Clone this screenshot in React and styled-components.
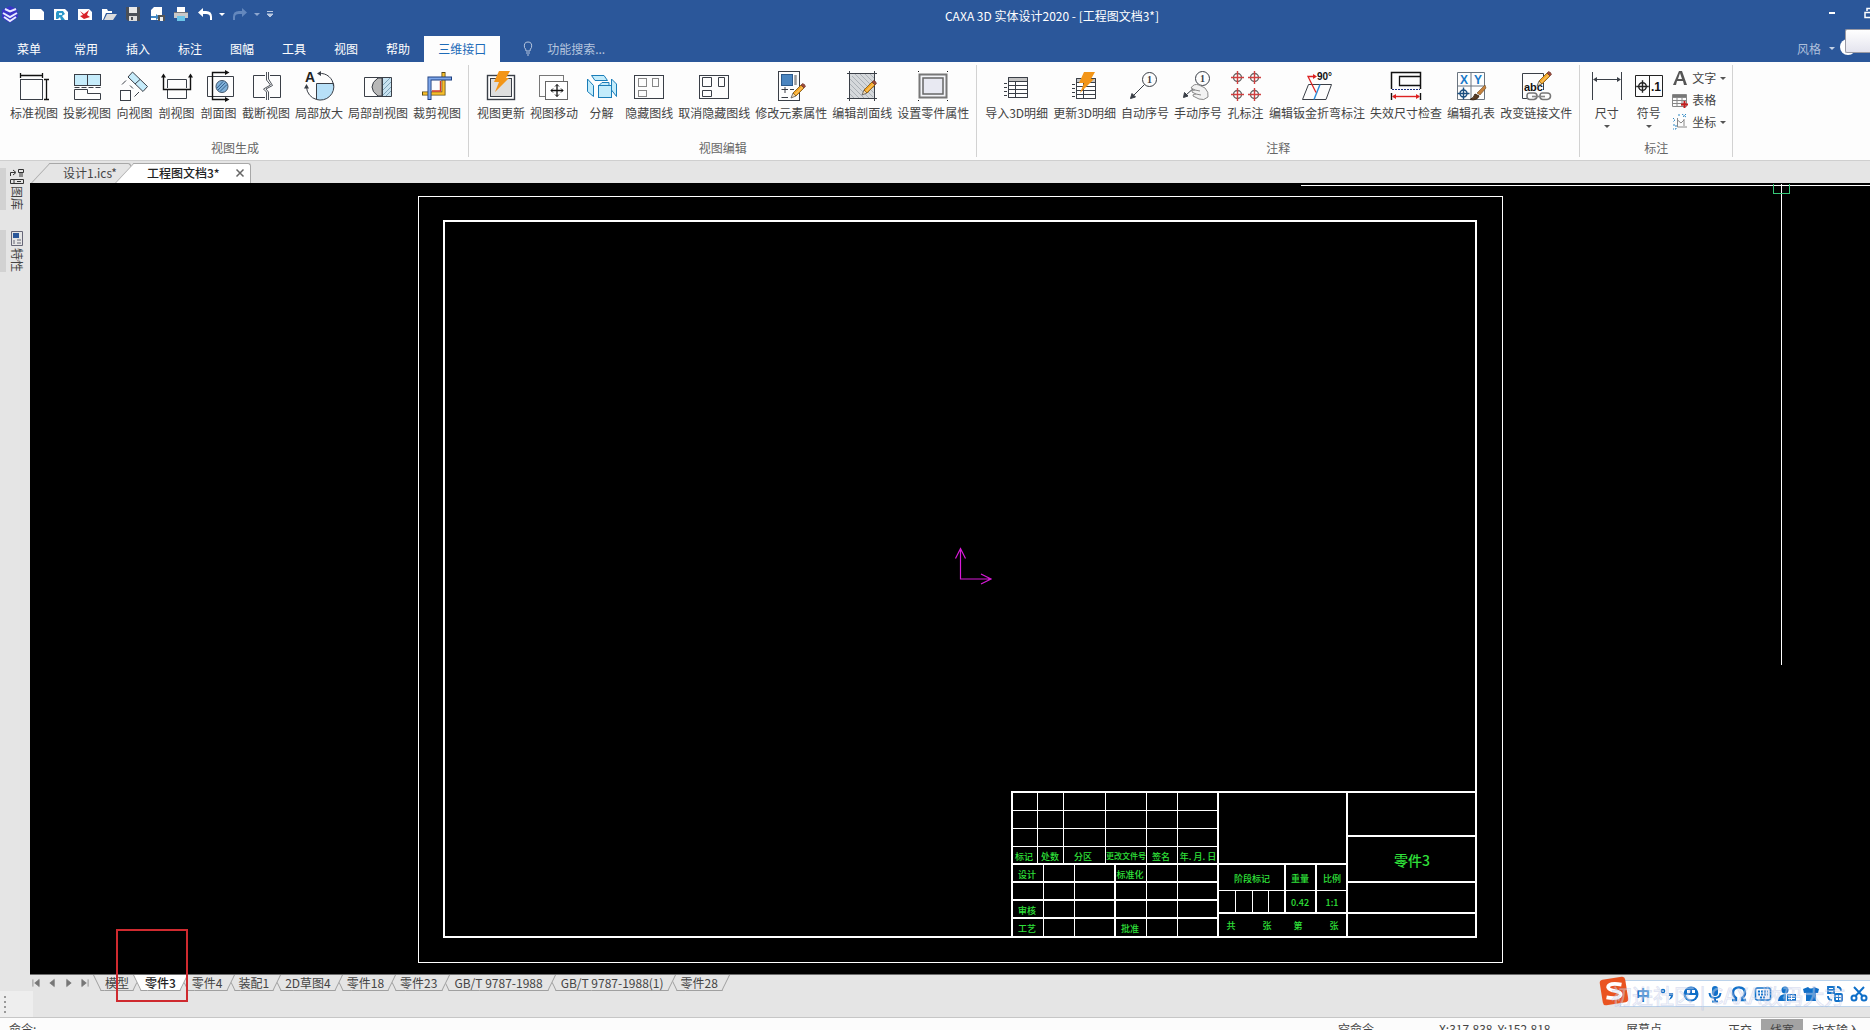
import React from "react";
import styled, { createGlobalStyle, css } from "styled-components";

// Global style
const GlobalStyle = createGlobalStyle`
  * {
    box-sizing: border-box;
  }
  body {
    margin: 0;
    overflow: hidden;
    font-family: "Noto Sans CJK SC", "Noto Sans", sans-serif;
    font-size: 12px;
    color: #444;
  }
  button,
  input {
    font: inherit;
    color: inherit;
    background: none;
    border: 0;
    padding: 0;
    margin: 0;
  }
  svg {
    display: block;
    flex-shrink: 0;
  }
`;

// Shared icon parts
const Pencil = ({ x, y }) => (
  <g transform={`translate(${x} ${y})`}>
    <path d="M0 14L2 9L5 12Z" fill="#f3d9b0" stroke="#555" strokeWidth="0.8" />
    <path d="M2 9L10 1L13 4L5 12Z" fill="#f5a623" stroke="#7a5312" strokeWidth="0.8" />
    <path d="M4 10.5L11.5 3" stroke="#fbd38a" />
    <path d="M10 1L11.5 -0.5Q14 0 14.5 2.5L13 4Z" fill="#9b4a3c" stroke="#6b3429" strokeWidth="0.6" />
  </g>
);

const Bolt = ({ x, y }) => (
  <path
    transform={`translate(${x} ${y})`}
    d="M5 0H16L12 7H15L1 21L5 11H0Z"
    fill="#f39517"
    stroke="none"
  />
);

const Target = ({ x, y, r, line, ring }) => (
  <g transform={`translate(${x} ${y})`} fill="none">
    <circle r={r} stroke={ring} strokeWidth="1.4" />
    <path d={`M${-r - 2.5} 0H${r + 2.5}M0 ${-r - 2.5}V${r + 2.5}`} stroke={line} strokeWidth="1.4" />
  </g>
);

const Table = ({ y }) => (
  <g transform={`translate(0 ${y})`}>
    <path d="M6.5 6.5H25.5V26.5H6.5Z" fill="#fff" />
    <path d="M7 7H25V10H7Z" fill="#c4c4c4" stroke="none" />
    <path d="M6.5 6.5H25.5V26.5H6.5ZM6.5 10.5H25.5M6.5 14.5H25.5M6.5 18.5H25.5M6.5 22.5H25.5M13.5 10.5V26.5M2 12.5H5M2 16.5H5M2 20.5H5M2 24.5H5" />
  </g>
);

const ink = "#3a3f47";

// Ribbon drawings, all on a 30 x 30 grid
const icons = {
  standard: (
    <g stroke="#111">
      <rect x="1.5" y="8.5" width="22" height="20" stroke={ink} />
      <path d="M1.5 4.5H23.5M1.5 2V7M23.5 2V7M27.5 8.5V28.5M25 8.5H30M25 28.5H30" strokeWidth="1.3" />
    </g>
  ),
  project: (
    <g>
      <rect x="2.5" y="3.5" width="26" height="11" fill="#c6ecfb" />
      <path d="M15.5 3.5V14.5M2.5 18.5H15.5V22.5H28.5V28.5H2.5Z" />
      <path d="M2.5 16.5H28.5" strokeDasharray="5 2" />
    </g>
  ),
  direction: (
    <g>
      <rect x="0.5" y="19.5" width="10" height="10" />
      <path d="M12.5 1L27.5 15.5L23 20.5L8 6Z" fill="#c6ecfb" />
      <path d="M20 8.5L15 13M2 13.5L6 9.5M10 14.5L13 17.5M14.5 25.5L19 21" />
    </g>
  ),
  section: (
    <g>
      <path d="M5.5 17V8.5H24.5V17M5.5 19V27.5H24.5V19" />
      <path d="M1.5 5V18.5H28.5V5" stroke="#111" strokeWidth="1.4" />
      <path d="M-1 6.5L1.5 2.5L4 6.5ZM26 6.5L28.5 2.5L31 6.5Z" fill="#111" stroke="none" />
    </g>
  ),
  plane: (
    <g>
      <path d="M8 5.5H3.5V25.5H29.5V5.5H9" />
      <path d="M22 1.5H8.5V28.5H22" stroke="#111" strokeWidth="1.4" />
      <path d="M21 -1L25.5 1.5L21 4ZM21 26L25.5 28.5L21 31Z" fill="#111" stroke="none" />
      <circle cx="18" cy="15.5" r="6" fill="#7fb0d8" stroke="#41566b" />
      <path d="M13 17L19 10.5M14 19L21.5 11.5M16 20.5L23 13.5" stroke="#35618c" />
    </g>
  ),
  broken: (
    <g>
      <path d="M14 4.5H2.5V26.5H14M19 4.5H29.5V26.5H19" />
      <path d="M15.5 1V9L19.5 14L12.5 18L15.5 21V29M17.5 1V8L21.5 14.5L15 18L17.5 21V29" strokeWidth="0.9" />
    </g>
  ),
  magnify: (
    <g>
      <path d="M12.5 12.5H29.5A13.5 13.5 0 0 1 12.5 28.5Z" fill="#b7e0f8" />
      <path d="M15 2.5A13 13 0 0 1 29.5 15M12.5 28.5A13.5 13.5 0 0 1 2.5 16" />
      <path d="M17 0L13 2.5L17 5ZM0 17.5L2.5 13L5 17.5Z" fill={ink} stroke="none" />
      <text x="1" y="11" fontSize="14" fontWeight="700" fill="#222" stroke="none" fontFamily="Liberation Sans">A</text>
    </g>
  ),
  partial: (
    <g>
      <rect x="19.5" y="6.5" width="9" height="19" fill="#c9e3f1" stroke="none" />
      <path d="M20 14L27 7M20 19L28 11M20 24L28 16M23 25L28 20" stroke="#7da3b8" />
      <path d="M19 7H15Q9 11 9 16T15 25H19Z" fill="#b8b8b8" />
      <path d="M1.5 6.5H28.5V25.5H1.5ZM19.5 6.5V25.5" />
    </g>
  ),
  crop: (
    <g>
      <path d="M21.5 1V22.5H0" stroke="#5c4a12" strokeWidth="4" />
      <path d="M21.5 2V22.5H1" stroke="#f7be2b" strokeWidth="2.4" />
      <path d="M18.5 10V20H10" stroke="#d83a24" strokeWidth="1.4" />
      <path d="M30 7.5H7.5V29" stroke="#1d3f80" strokeWidth="4" />
      <path d="M29 7.5H7.5V28" stroke="#7fa8ec" strokeWidth="2.2" />
    </g>
  ),
  refresh: (
    <g>
      <rect x="1.5" y="4.5" width="27" height="24" fill="#fff" strokeWidth="1.4" />
      <rect x="4.5" y="7.5" width="21" height="18" fill="#dedede" />
      <Bolt x="8" y="0" />
    </g>
  ),
  move: (
    <g>
      <rect x="0.5" y="4.5" width="24" height="21" stroke="#777" />
      <rect x="6.5" y="10.5" width="22" height="18" fill="#fff" stroke="#666" />
      <path d="M12 19.5H24M18 13.5V25.5" stroke="#111" strokeWidth="1.3" />
      <path d="M14 17.5L12 19.5L14 21.5M22 17.5L24 19.5L22 21.5M16 15.5L18 13.5L20 15.5M16 23.5L18 25.5L20 23.5" stroke="#111" />
    </g>
  ),
  explode: (
    <g stroke="#1a7db8" fill="#c3ecfb">
      <path d="M4.5 4.5H17L20.5 9.5H8ZM0.5 8L6.5 14.5V25.5L0.5 20.5ZM24.5 8L29.5 13V25.5L24.5 19Z" />
      <path d="M12 14.5L15 11.5H22V14" />
      <rect x="11.5" y="14.5" width="13" height="12" />
    </g>
  ),
  hide: (
    <g>
      <rect x="0.5" y="4.5" width="29" height="23" />
      <path d="M4.5 7.5H12.5V15.5H4.5ZM18.5 7.5H24.5V15.5H18.5ZM4.5 19.5H12.5V25.5H4.5Z" strokeDasharray="1 1" stroke="#111" />
    </g>
  ),
  unhide: (
    <g>
      <rect x="0.5" y="4.5" width="29" height="23" />
      <path d="M3.5 6.5H12.5V15.5H3.5ZM19.5 6.5H25.5V15.5H19.5ZM3.5 19.5H12.5V25.5H3.5Z" />
    </g>
  ),
  modify: (
    <g>
      <rect x="2.5" y="0.5" width="21" height="29" />
      <rect x="5.5" y="3.5" width="11" height="11" fill="#4a85c0" stroke="#2b5a8c" />
      <path d="M19.5 4V14" stroke="#999" strokeWidth="2.5" />
      <path d="M5.5 18.5H12M9 16V22M14 18.5H18M5.5 26.5H12" />
      <Pencil x="15" y="13" />
    </g>
  ),
  hatch: (
    <g>
      <rect x="3" y="3" width="24" height="24" fill="#d5d8db" stroke="none" />
      <path d="M3 8L22 27M3 13L17 27M3 18L12 27M3 23L7 27M5 5L26 26M8 3L27 22M13 3L27 17M18 3L27 12M23 3L27 7" stroke="#aab0b6" />
      <path d="M0 2.5H30M0 27.5H30M2.5 0V30M27.5 0V30" />
      <Pencil x="15" y="10" />
    </g>
  ),
  setup: (
    <g>
      <rect x="1.5" y="3.5" width="27" height="23" fill="#f3f4f8" stroke="#777" strokeWidth="2" />
      <rect x="5" y="7" width="20" height="16" fill="#e8e9f2" stroke="#666" strokeWidth="1.5" />
      <path d="M0 0.5H1M29 0.5H30M0 29.5H1M29 29.5H30" stroke="#111" />
    </g>
  ),
  importTable: <Table y={0} />,
  updateTable: (
    <g>
      <Table y={1} />
      <Bolt x="9" y="1" />
    </g>
  ),
  autoNumber: (
    <g>
      <circle cx="19.5" cy="8.5" r="7" />
      <path d="M14.5 13.5L3 25" />
      <path d="M0.5 27.5L2 22.5L5.5 26Z" fill={ink} />
      <text x="17" y="12" fontSize="10" fill={ink} stroke="none" fontFamily="Liberation Serif" fontWeight="700">1</text>
    </g>
  ),
  manualNumber: (
    <g>
      <circle cx="19.5" cy="7.5" r="7" />
      <path d="M12 16L3 24" />
      <path d="M0.5 26.5L1.5 21.5L5 25Z" fill={ink} />
      <path d="M8 17Q11 12 16 14L22 17Q26 21 25 26Q21 30 16 28L10 25Q9 23 13 23L9 21Q8 19 12 19L8 17Z" fill="#f2f2f2" stroke="#8a8a8a" />
      <path d="M12 19L17 20M13 23L18 24" stroke="#8a8a8a" />
      <text x="17" y="11" fontSize="10" fill={ink} stroke="none" fontFamily="Liberation Serif" fontWeight="700">1</text>
    </g>
  ),
  hole: (
    <g>
      {[6.5, 23.5].map((cx) =>
        [6.5, 23.5].map((cy) => (
          <Target key={`${cx}-${cy}`} x={cx} y={cy} r={4} ring="#666" line="#d04040" />
        ))
      )}
    </g>
  ),
  bend: (
    <g>
      <path d="M6.5 13.5H29.5L24 28.5H0.5Z" />
      <path d="M18 13.5L12 28.5" stroke="#2b8bd8" strokeWidth="1.4" />
      <path d="M14 21.5L6 5.5H13" stroke="#d22" strokeWidth="1.3" />
      <path d="M11 3L15 5.5L11 8Z" fill="#d22" stroke="none" />
      <text x="15" y="9" fontSize="10" fontWeight="700" fill="#111" stroke="none" fontFamily="Liberation Sans">90°</text>
    </g>
  ),
  invalid: (
    <g stroke="#111">
      <path d="M0.5 18V1.5H29.5V18" strokeWidth="1.5" />
      <path d="M29.5 5.5H8.5V14.5H29.5" strokeWidth="1.3" />
      <path d="M1 18.5H29" stroke="#1c2f80" strokeDasharray="2 1" />
      <path d="M0.5 22V29M29.5 22V29" strokeWidth="1.4" />
      <path d="M2 25.5H28" stroke="#d22" strokeWidth="1.4" />
      <path d="M5 23L1 25.5L5 28ZM25 23L29 25.5L25 28Z" fill="#d22" stroke="none" />
    </g>
  ),
  holeTable: (
    <g>
      <path d="M1.5 1.5H28.5V28.5H1.5ZM15 1.5V28.5M1.5 15H28.5" stroke="#6a7580" />
      <text x="4" y="13" fontSize="12" fontWeight="700" fill="#1878c8" stroke="none" fontFamily="Liberation Sans">X</text>
      <text x="18" y="13" fontSize="12" fontWeight="700" fill="#1878c8" stroke="none" fontFamily="Liberation Sans">Y</text>
      <Target x={7.5} y={22.5} r={3.5} ring="#1b4f80" line="#1b4f80" />
      <path d="M21 22L29 14L30 17L24 24Z" fill="#c4803c" stroke="#6b4a22" strokeWidth="0.6" />
      <path d="M14 28.5Q18 27 19 23L23 25Q21 30 14 28.5Z" fill="#5a3b22" stroke="#3c2817" />
    </g>
  ),
  link: (
    <g>
      <path d="M22.5 10V2.5H1.5V27.5H6M22.5 12V19" />
      <text x="3" y="20" fontSize="11" fontWeight="700" fill="#111" stroke="none" fontFamily="Liberation Sans">abc</text>
      <path d="M9 22H13Q16 22 16 25T13 28.5H9Q6 28.5 6 25T9 22ZM22 22H26Q29.5 22 29.5 25T26 28.5H22Q19 28.5 19 25T22 22Z" stroke="#777" strokeWidth="1.6" />
      <path d="M11 25.5H24" stroke="#888" strokeWidth="1.6" />
      <Pencil x="16" y="1" />
    </g>
  ),
  size: (
    <g>
      <path d="M0.5 1V29M29.5 1V29M2 8.5H28" />
      <path d="M5 6L1 8.5L5 11ZM25 6L29 8.5L25 11Z" fill={ink} stroke="none" />
    </g>
  ),
  symbol: (
    <g stroke="#222">
      <path d="M1.5 4.5H28.5V25.5H1.5ZM15.5 4.5V25.5" />
      <Target x={8.5} y={15.5} r={3.8} ring="#222" line="#222" />
      <text x="17" y="20" fontSize="12" fontWeight="700" fill="#111" stroke="none" fontFamily="Liberation Sans">.1</text>
    </g>
  ),
};

const Icon = ({ name }) => (
  <svg width="30" height="30" viewBox="0 0 30 30" fill="none" stroke={ink} overflow="visible">
    {icons[name]}
  </svg>
);

// Small drawings of the quick access bar, 18 x 18
const quickIcons = {
  logo: (
    <g>
      <path d="M1 5L9 1L16 4L17 12L9 18L1 13Z" fill="#3a35c8" />
      <path d="M4 4L9 6.5L15 4M2 8L9 12L16 8M3 12L9 16L15 12" stroke="#e8ecff" strokeWidth="2" fill="none" />
    </g>
  ),
  page: <path d="M2 4H13L16 7V15H2Z" fill="#fff" />,
  ics: (
    <g>
      <path d="M2 4H13L16 7V15H2Z" fill="#fff" />
      <path d="M5 6H11L13 9L10 11L13 15H9L8 12L6 14H4V8Z" fill="#2a97c9" />
      <path d="M7 8H10V10H7Z" fill="#d9f2fb" />
    </g>
  ),
  exb: (
    <g>
      <path d="M2 4H13L16 7V15H2Z" fill="#fff" />
      <path d="M4 6L8 9L13 5L11 10L14 12L8 14L4 11L7 10Z" fill="#d8232a" />
    </g>
  ),
  open: (
    <g>
      <path d="M2 15V4H7L8 6H12V8H6L3 15Z" fill="#fff" />
      <path d="M7 9H17L13 15H4Z" fill="#dcdcdc" />
    </g>
  ),
  save: (
    <g>
      <path d="M2 2H16V16H4L2 14Z" fill="#4a4f57" />
      <path d="M5 2H13V8H5Z" fill="#e8e8e8" />
      <path d="M5 11H13V16H5Z" fill="#dcdcdc" />
      <path d="M7 12H9V15H7Z" fill="#4a4f57" />
    </g>
  ),
  saveAs: (
    <g>
      <path d="M6 2H14V10H10V15H3V5Z" fill="#fff" />
      <path d="M3 11H8V9L12 12L8 15V13H3Z" fill="#3f87c4" />
      <path d="M10 10H17V16H10Z" fill="#555" />
      <path d="M12 12H15V16H12Z" fill="#eee" />
    </g>
  ),
  print: (
    <g>
      <path d="M5 2H13V7H5Z" fill="#fff" />
      <path d="M2 7H16V13H2Z" fill="#c9c9c9" />
      <path d="M2 7H16V8H2Z" fill="#777" />
      <path d="M5 11H13V16H5Z" fill="#6cc5e8" />
    </g>
  ),
  undo: <path d="M7 3V6H10Q16 6 16 12V15H14V12Q14 9 10 9H7V12L2 7.5Z" fill="#fff" />,
  redo: <path d="M11 3V6H8Q2 6 2 12V15H4V12Q4 9 8 9H11V12L16 7.5Z" fill="#6488bd" />,
};

const QuickIcon = ({ name }) => (
  <svg width="18" height="18" viewBox="0 0 18 18">
    {quickIcons[name]}
  </svg>
);

const smallIcons = {
  text: <path d="M1 15L7 1H10L15 15H12L11 11H5L4 15ZM6 9H10L8 3Z" fill="#555" />,
  table: (
    <g>
      <path d="M1 2H14V5H1Z" fill="#777" />
      <path d="M0.5 2.5H14.5V14.5H0.5ZM0.5 5.5H14.5M0.5 8.5H14.5M0.5 11.5H14.5M5 5V14M10 5V14" stroke="#888" fill="none" />
      <path d="M12.5 9V16M9 12.5H16" stroke="#c41f1f" strokeWidth="2" />
    </g>
  ),
  axis: (
    <g fill="none">
      <path d="M5.5 4V13H15M5.5 6L9 9L12 6M12 5V12" stroke="#888" />
      <path d="M1 4L3 6L1 8M1 11H4V15H1M6 1H8M10 0L14 3M14 0L11 3" stroke="#2b87c4" strokeDasharray="2 1" />
    </g>
  ),
};

const Caret = styled.span`
  display: inline-block;
  flex-shrink: 0;
  border: 3px solid transparent;
  border-top-color: ${(p) => p.$color || "#555"};
  border-bottom: 0;
`;

// Window frame
const Shell = styled.div`
  position: relative;
  display: flex;
  flex-direction: column;
  height: 100vh;
  overflow: hidden;
  background: #e5e5e5;
`;

const TitleBar = styled.header`
  display: flex;
  height: 36px;
  flex-shrink: 0;
  padding-bottom: 8px;
  align-items: center;
  background: #2b579a;
  color: #fff;
`;

const QuickAccess = styled.div`
  display: flex;
  align-items: center;
  width: 276px;
  flex-shrink: 0;
  gap: 6px;
  padding-left: 1px;
`;

const QuickButton = styled.button`
  display: flex;
  align-items: center;
  gap: 5px;
  &:first-child {
    margin-right: 3px;
  }
`;

const WindowTitle = styled.h1`
  flex: 1;
  margin: 0;
  padding-top: 4px;
  font-size: 12px;
  font-weight: 400;
  line-height: 20px;
  text-align: center;
`;

const WindowButtons = styled.div`
  display: flex;
  gap: 28px;
  width: 42px;
  overflow: hidden;
`;

const WindowButton = styled.button`
  flex-shrink: 0;
  color: #fff;
`;

// Menu row
const MenuBar = styled.nav`
  display: flex;
  height: 26px;
  flex-shrink: 0;
  align-items: stretch;
  background: #2b579a;
  color: #fff;
`;

const MenuTab = styled.button`
  padding: 0 14px 2px;
  white-space: nowrap;
  ${(p) =>
    p.$wide &&
    css`
      padding: 0 19px 2px 17px;
    `}
  ${(p) =>
    p.$active &&
    css`
      background: #fdfdfd;
      color: #1e6bb8;
    `}
`;

const SearchBox = styled.label`
  display: flex;
  flex: 1;
  align-items: center;
  gap: 11px;
  padding: 0 0 2px 20px;
  color: #b5c5de;
`;

const SearchInput = styled.input`
  width: 160px;
  outline: none;
  &::placeholder {
    color: #b5c5de;
    opacity: 1;
  }
`;

const StyleButton = styled.button`
  display: flex;
  align-items: center;
  gap: 8px;
  padding-bottom: 2px;
  color: #aebfdb;
`;

const HelpDot = styled.span`
  width: 16px;
  height: 16px;
  margin: 3px 14px 0 5px;
  border-radius: 50%;
  background: #fff;
`;

const FloatPanel = styled.div`
  position: absolute;
  top: 29px;
  right: 0;
  width: 25px;
  height: 24px;
  border: 1px solid #9a9aa4;
  border-right: 0;
  border-radius: 2px 0 0 2px;
  background: linear-gradient(#fff, #e4e4ee);
`;

// Ribbon
const Ribbon = styled.section`
  display: flex;
  height: 99px;
  flex-shrink: 0;
  padding: 3px 0 3px 2px;
  background: #fdfdfd;
  border-bottom: 1px solid #cfcfcf;
`;

const Group = styled.div`
  display: flex;
  flex-direction: column;
  justify-content: space-between;
  padding: 6px 5px 0;
  border-right: 1px solid #d2d2d2;
`;

const GroupTools = styled.div`
  display: flex;
`;

const GroupName = styled.div`
  line-height: 18px;
  text-align: center;
  color: #666;
`;

const Tool = styled.button`
  display: flex;
  flex-direction: column;
  align-items: center;
  min-width: 42px;
  padding: 0 2px 0 3px;
  line-height: 18px;
  white-space: nowrap;
  gap: 3px;
`;

const ToolColumn = styled.div`
  display: flex;
  flex-direction: column;
  width: 58px;
  padding-left: 3px;
`;

const SmallTool = styled.button`
  display: flex;
  align-items: center;
  gap: 4px;
  height: 22px;
  padding-bottom: 8px;
  line-height: 14px;
  white-space: nowrap;
`;

// Work area
const Work = styled.div`
  display: flex;
  flex: 1;
  min-height: 0;
`;

const SideBar = styled.aside`
  display: flex;
  flex-direction: column;
  gap: 20px;
  width: 30px;
  flex-shrink: 0;
  padding-top: 7px;
`;

const SideTab = styled.button`
  display: flex;
  flex-direction: column;
  align-items: center;
  gap: 1px;
  height: 42px;
  padding-right: 2px;
  border-left: 6px solid #d2d2d2;
`;

const SideLabel = styled.span`
  writing-mode: vertical-rl;
  text-orientation: sideways;
  line-height: 16px;
`;

const Main = styled.main`
  display: flex;
  flex: 1;
  flex-direction: column;
  min-width: 0;
`;

const DocTabs = styled.div`
  display: flex;
  height: 22px;
  flex-shrink: 0;
  padding: 2px 0 0 1px;
`;

const DocTab = styled.div`
  position: relative;
  isolation: isolate;
  display: flex;
  align-items: center;
  gap: 15px;
  height: 20px;
  padding: 0 ${(p) => (p.$active ? "6px 0 32px" : "14px 0 32px")};
  margin-left: ${(p) => (p.$active ? "-16px" : "0")};
  &::before,
  &::after {
    content: "";
    position: absolute;
    z-index: -1;
    top: 0;
    bottom: 0;
    background: ${(p) => (p.$active ? "#fff" : "#e5e5e5")};
    border-top: 1px solid #a8a8a8;
  }
  &::before {
    left: 0;
    width: 50%;
    border-left: 1px solid #a8a8a8;
    transform: skewX(-43deg);
    transform-origin: bottom left;
  }
  &::after {
    left: 30px;
    right: 0;
    border-right: 1px solid #a8a8a8;
    border-radius: 0 3px 0 0;
  }
`;

const DocName = styled.button`
  line-height: 18px;
  font-weight: ${(p) => (p.$active ? 500 : 400)};
  color: ${(p) => (p.$active ? "#222" : "#444")};
`;

const Canvas = styled.div`
  flex: 1;
  min-height: 0;
  background: #000;
`;

// Sheet tabs under the drawing
const SheetBar = styled.div`
  position: relative;
  display: flex;
  height: 17px;
  flex-shrink: 0;
  border-top: 1px solid #6e6e6e;
`;

const SheetNav = styled.div`
  display: flex;
  align-items: center;
  gap: 7px;
  width: 63px;
  padding-left: 2px;
`;

const SheetTab = styled.button`
  position: relative;
  isolation: isolate;
  z-index: ${(p) => p.$order};
  height: 16px;
  margin-right: -8px;
  padding: 0 ${(p) => (p.$wide ? 13 : 12)}px;
  line-height: 14px;
  white-space: nowrap;
  font-weight: ${(p) => (p.$active ? 500 : 400)};
  color: ${(p) => (p.$active ? "#222" : "#444")};
  &::before,
  &::after {
    content: "";
    position: absolute;
    z-index: -1;
    top: 0;
    bottom: 0;
    background: ${(p) => (p.$active ? "#fff" : "#e5e5e5")};
    border-bottom: 1px solid #a0a0a0;
  }
  &::before {
    left: 0;
    right: 40%;
    border-left: 1px solid #a0a0a0;
    transform: skewX(26deg);
    transform-origin: top left;
  }
  &::after {
    left: 40%;
    right: 0;
    border-right: 1px solid #a0a0a0;
    transform: skewX(-26deg);
    transform-origin: top right;
  }
`;

const Marker = styled.div`
  position: absolute;
  z-index: 30;
  left: 86px;
  top: -46px;
  width: 72px;
  height: 73px;
  border: 2px solid #cf2a2f;
`;

const Dock = styled.div`
  height: 26px;
  flex-shrink: 0;
`;

const Grip = styled.div`
  display: flex;
  flex-direction: column;
  justify-content: center;
  gap: 3px;
  width: 33px;
  height: 26px;
  padding-left: 4px;
  background: #eeeeee;
`;

const Dot = styled.i`
  width: 2px;
  height: 2px;
  background: #999;
`;

// Status bar
const StatusBar = styled.footer`
  display: flex;
  height: 13px;
  flex-shrink: 0;
  overflow: hidden;
  padding: 1px 1px 0 9px;
  line-height: 20px;
  background: #fcfcfc;
  border-top: 1px solid #c6c6c6;
`;

const Command = styled.span`
  flex: 1;
`;

const StatusItem = styled.span`
  width: ${(p) => p.$width}px;
  white-space: pre;
`;

const StatusToggle = styled.button`
  height: 22px;
  line-height: 20px;
  padding: 0 9px;
  background: ${(p) => (p.$on ? "#a3a3a3" : "none")};
`;

// Input method bar
const InputBar = styled.div`
  position: absolute;
  right: 0;
  bottom: 23px;
  display: flex;
  align-items: center;
  width: 250px;
  height: 27px;
  padding-left: 13px;
  gap: 6px;
  background: #fff;
  border: 1px solid #bcd3ea;
  border-right: 0;
  color: #0f6fc8;
`;

const InputLogo = styled.div`
  position: absolute;
  left: -22px;
  top: -5px;
  width: 30px;
  height: 30px;
`;

const InputButton = styled.button`
  display: flex;
  justify-content: center;
  width: 18px;
  flex-shrink: 0;
  font-size: 14px;
  font-weight: 700;
  line-height: 20px;
`;

const Watermark = styled.span`
  position: absolute;
  left: -10px;
  top: 0;
  font-size: 21px;
  line-height: 28px;
  white-space: nowrap;
  color: rgba(255, 255, 255, 0.35);
  -webkit-text-stroke: 1px rgba(150, 165, 215, 0.3);
  pointer-events: none;
`;

const menus = ["常用", "插入", "标注", "图幅", "工具", "视图", "帮助"];

const groups = [
  {
    name: "视图生成",
    tools: [
      ["standard", "标准视图"],
      ["project", "投影视图"],
      ["direction", "向视图"],
      ["section", "剖视图"],
      ["plane", "剖面图"],
      ["broken", "截断视图"],
      ["magnify", "局部放大"],
      ["partial", "局部剖视图"],
      ["crop", "裁剪视图"],
    ],
  },
  {
    name: "视图编辑",
    tools: [
      ["refresh", "视图更新"],
      ["move", "视图移动"],
      ["explode", "分解"],
      ["hide", "隐藏图线"],
      ["unhide", "取消隐藏图线"],
      ["modify", "修改元素属性"],
      ["hatch", "编辑剖面线"],
      ["setup", "设置零件属性"],
    ],
  },
  {
    name: "注释",
    tools: [
      ["importTable", "导入3D明细"],
      ["updateTable", "更新3D明细"],
      ["autoNumber", "自动序号"],
      ["manualNumber", "手动序号"],
      ["hole", "孔标注"],
      ["bend", "编辑钣金折弯标注"],
      ["invalid", "失效尺寸检查"],
      ["holeTable", "编辑孔表"],
      ["link", "改变链接文件"],
    ],
  },
];

const smallTools = [
  ["text", "文字", true],
  ["table", "表格", false],
  ["axis", "坐标", true],
];

const sheets = [
  "模型",
  "零件3",
  "零件4",
  "装配1",
  "2D草图4",
  "零件18",
  "零件23",
  "GB/T 9787-1988",
  "GB/T 9787-1988(1)",
  "零件28",
];

const navIcons = ["M1 1V9M8 1V9L3 5Z", "M7 1V9L2 5Z", "M3 1V9L8 5Z", "M2 1V9L7 5ZM9 1V9"];

// Title block texts: x, y, text, size
const blockTexts = [
  [1024, 855, "标记"],
  [1050, 855, "处数"],
  [1083, 855, "分区"],
  [1126, 855, "更改文件号", 8],
  [1161, 855, "签名"],
  [1198, 855, "年. 月. 日"],
  [1027, 873, "设计"],
  [1130, 873, "标准化"],
  [1027, 909, "审核"],
  [1027, 927, "工艺"],
  [1130, 927, "批准"],
  [1252, 877, "阶段标记"],
  [1300, 877, "重量"],
  [1332, 877, "比例"],
  [1300, 901, "0.42"],
  [1332, 901, "1:1"],
  [1231, 924, "共"],
  [1267, 924, "张"],
  [1298, 924, "第"],
  [1334, 924, "张"],
  [1412, 859, "零件3", 14],
];

const Drawing = () => (
  <svg width="100%" height="100%" viewBox="30 183 1840 790" fill="none" stroke="#fff" shapeRendering="crispEdges">
    <path d="M418.5 195.5H1502.5V961.5H418.5Z" />
    <path d="M444 220H1476V936H444Z" strokeWidth="2" />
    {/* title block, heavy lines */}
    <path
      strokeWidth="2"
      d="M1012 936V791H1476M1012 863H1347M1012 881H1218M1012 899H1218M1012 917H1218M1218 791V936M1347 791V936M1115 863V936M1218 912H1476M1285 863V912M1316 863V912M1347 835H1476M1347 881H1476"
    />
    {/* title block, thin lines */}
    <path d="M1012 809.5H1218M1012 827.5H1218M1012 845.5H1218M1037.5 791V863M1063.5 791V863M1105.5 791V863M1146.5 791V936M1177.5 791V936M1043.5 863V936M1074.5 863V936M1218 889.5H1347M1235.5 889V912M1252.5 889V912M1268.5 889V912" />
    <g fill="#2fe03a" stroke="none" textAnchor="middle" fontWeight="500">
      {blockTexts.map(([x, y, text, size = 9], i) => (
        <text key={i} x={x} y={y + Math.round(size * 0.4)} fontSize={size}>
          {text}
        </text>
      ))}
    </g>
    <g stroke="#d81bd8" shapeRendering="auto" strokeWidth="1.2">
      <path d="M960.5 548V578.5H991M955.5 558L960.5 548L965.5 558M981 573.5L991 578.5L981 583.5" />
    </g>
    <path d="M1301 184.5H1870M1781.5 183V664" />
    <path d="M1773.5 183V192.5H1789.5V183" stroke="#36c878" />
  </svg>
);

const inputIcons = [
  <g fill="currentColor">
    <circle cx="5" cy="6" r="1.6" fill="none" stroke="currentColor" strokeWidth="1.5" />
    <path d="M11 8H15Q16 13 11 15L13 11H11Z" />
  </g>,
  <g>
    <circle cx="9" cy="9" r="7.5" fill="currentColor" />
    <path d="M4 10H14Q13 14.5 9 14.5T4 10ZM5 5H8V8H5ZM10 5H13V8H10Z" fill="#fff" />
  </g>,
  <g>
    <rect x="6" y="1" width="6" height="10" rx="3" fill="currentColor" />
    <path d="M3.5 8Q4 13 9 13T14.5 8M9 13V16M6 16.5H12" stroke="currentColor" strokeWidth="2" fill="none" />
  </g>,
  <path d="M2 15H6V13Q3 11 3 8Q3 2.5 9 2.5T15 8Q15 11 12 13V15H16" stroke="currentColor" strokeWidth="2.4" fill="none" />,
  <g>
    <rect x="1.5" y="3" width="15" height="12" rx="2" stroke="currentColor" strokeWidth="1.6" fill="none" />
    <path d="M4 6.5H14M4 9.5H14M6 12.5H12" stroke="currentColor" strokeWidth="1.8" strokeDasharray="2 1" />
  </g>,
  <g fill="currentColor">
    <circle cx="7" cy="5" r="3.5" />
    <path d="M0 15Q1 9 8 9V16H0ZM9 9H18V16H9Z" />
    <path d="M10 11H17M10 13.5H17M13.5 10V15" stroke="#fff" />
  </g>,
  <path d="M6 2Q9 5 12 2L17 4L16 8H14V16H4V8H2L1 4Z" fill="currentColor" />,
  <g stroke="currentColor" fill="none" strokeWidth="1.8">
    <path d="M2 2H8V8H2ZM11 2Q15 2 15 6M2 11Q2 15 6 15M2 5H8" />
    <rect x="9" y="9" width="7" height="7" rx="1" />
    <path d="M10 12.5H15M12.5 10V15" strokeWidth="1" />
  </g>,
  <g stroke="currentColor" fill="none" strokeWidth="2">
    <circle cx="4" cy="13" r="2.5" />
    <circle cx="14" cy="13" r="2.5" />
    <path d="M5.5 11L14 2M12.5 11L4 2" />
  </g>,
];

const App = () => {
  return (
    <>
      <GlobalStyle />
      <Shell>
        <TitleBar>
          <QuickAccess>
            {Object.keys(quickIcons).map((name) => (
              <QuickButton key={name} aria-label={name}>
                <QuickIcon name={name} />
                {name === "undo" && <Caret $color="#fff" />}
                {name === "redo" && <Caret $color="#8fa8cf" />}
              </QuickButton>
            ))}
            <QuickButton aria-label="customize">
              <svg width="8" height="8" viewBox="0 0 8 8">
                <path d="M1 1.5H7M1 4H7L4 7Z" stroke="#b9c8e0" fill="#b9c8e0" />
              </svg>
            </QuickButton>
          </QuickAccess>
          <WindowTitle>CAXA 3D 实体设计2020 - [工程图文档3*]</WindowTitle>
          <WindowButtons>
            <WindowButton aria-label="minimize">
              <svg width="8" height="10" viewBox="0 0 8 10">
                <path d="M1 4H7" stroke="#fff" strokeWidth="2" />
              </svg>
            </WindowButton>
            <WindowButton aria-label="restore">
              <svg width="10" height="14" viewBox="0 0 10 14">
                <path d="M3 4V1.5H10M1 5.5H8V10.5H1Z" stroke="#fff" strokeWidth="1.5" fill="none" />
              </svg>
            </WindowButton>
          </WindowButtons>
        </TitleBar>

        <MenuBar>
          <MenuTab $wide>菜单</MenuTab>
          {menus.map((menu) => (
            <MenuTab key={menu}>{menu}</MenuTab>
          ))}
          <MenuTab $active>三维接口</MenuTab>
          <SearchBox>
            <svg width="16" height="16" viewBox="0 0 16 16" fill="none" stroke="#b5c5de">
              <path d="M6 11Q6 9 4.5 7.5Q3.5 2 8 2T11.5 7.5Q10 9 10 11ZM6 13H10M7 15H9" />
            </svg>
            <SearchInput type="text" placeholder="功能搜索..." />
          </SearchBox>
          <StyleButton>
            风格
            <Caret $color="#c5d2e6" />
          </StyleButton>
          <HelpDot />
        </MenuBar>
        <FloatPanel />

        <Ribbon>
          {groups.map((group) => (
            <Group key={group.name}>
              <GroupTools>
                {group.tools.map(([icon, label]) => (
                  <Tool key={icon}>
                    <Icon name={icon} />
                    {label}
                  </Tool>
                ))}
              </GroupTools>
              <GroupName>{group.name}</GroupName>
            </Group>
          ))}
          <Group>
            <GroupTools>
              <Tool>
                <Icon name="size" />
                尺寸
                <Caret />
              </Tool>
              <Tool>
                <Icon name="symbol" />
                符号
                <Caret />
              </Tool>
              <ToolColumn>
                {smallTools.map(([icon, label, more]) => (
                  <SmallTool key={icon}>
                    <svg width="16" height="16" viewBox="0 0 16 16">
                      {smallIcons[icon]}
                    </svg>
                    {label}
                    {more && <Caret />}
                  </SmallTool>
                ))}
              </ToolColumn>
            </GroupTools>
            <GroupName>标注</GroupName>
          </Group>
        </Ribbon>

        <Work>
          <SideBar>
            <SideTab>
              <svg width="16" height="17" viewBox="0 0 16 17" fill="none" stroke="#333">
                <path d="M1.5 8V4.5H6M4 2L7 4.5L4 7M9.5 1.5H14.5V4.5H9.5ZM11 5V9M13 5V9M1.5 11.5H14.5V15.5H1.5ZM5 11V16M8 13.5H12" />
              </svg>
              <SideLabel>图库</SideLabel>
            </SideTab>
            <SideTab>
              <svg width="14" height="17" viewBox="0 0 14 17" fill="none" stroke="#667">
                <path d="M1.5 1.5H12.5V15.5H1.5ZM4 10V14M7 10H11M7 13H11" />
                <path d="M3 3H9V8H3Z" fill="#2b579a" stroke="none" />
              </svg>
              <SideLabel>特性</SideLabel>
            </SideTab>
          </SideBar>
          <Main>
            <DocTabs>
              <DocTab>
                <DocName>设计1.ics*</DocName>
              </DocTab>
              <DocTab $active>
                <DocName $active>工程图文档3*</DocName>
                <button aria-label="close">
                  <svg width="10" height="10" viewBox="0 0 10 10">
                    <path d="M1.5 1.5L8.5 8.5M8.5 1.5L1.5 8.5" stroke="#666" strokeWidth="1.5" />
                  </svg>
                </button>
              </DocTab>
            </DocTabs>
            <Canvas>
              <Drawing />
            </Canvas>
            <SheetBar>
              <SheetNav>
                {navIcons.map((d) => (
                  <button key={d} aria-label="sheet">
                    <svg width="9" height="10" viewBox="0 0 10 10">
                      <path d={d} fill="#777" stroke="#777" strokeWidth="0.8" />
                    </svg>
                  </button>
                ))}
              </SheetNav>
              {sheets.map((sheet, i) => (
                <SheetTab
                  key={sheet}
                  $active={i === 1}
                  $wide={sheet.startsWith("GB")}
                  $order={i === 1 ? 20 : 12 - i}
                >
                  {sheet}
                </SheetTab>
              ))}
              <Marker />
            </SheetBar>
          </Main>
        </Work>

        <Dock>
          <Grip>
            <Dot />
            <Dot />
            <Dot />
            <Dot />
          </Grip>
        </Dock>

        <StatusBar>
          <Command>命令:</Command>
          <StatusItem $width={101}>空命令</StatusItem>
          <StatusItem $width={187}>X:317.838  Y:152.818</StatusItem>
          <StatusItem $width={93}>屏幕点</StatusItem>
          <StatusToggle>正交</StatusToggle>
          <StatusToggle $on>线宽</StatusToggle>
          <StatusToggle>动态输入</StatusToggle>
        </StatusBar>

        <InputBar>
          <InputLogo>
            <svg width="30" height="30" viewBox="0 0 28 28">
              <rect x="2" y="2" width="24" height="24" rx="3" fill="#ea5421" transform="rotate(-9 14 14)" />
              <path d="M21 8Q9 6 8.5 10.5Q9 13 15 14T20 18Q18 22 7 20" stroke="#fff" strokeWidth="3.5" fill="none" />
            </svg>
          </InputLogo>
          <InputButton>中</InputButton>
          {inputIcons.map((icon, i) => (
            <InputButton key={i} aria-label="input tool">
              <svg width="18" height="18" viewBox="0 0 18 18">
                {icon}
              </svg>
            </InputButton>
          ))}
          <Watermark>初进社区 | CAXA数码大方</Watermark>
        </InputBar>
      </Shell>
    </>
  );
};

export default App;
